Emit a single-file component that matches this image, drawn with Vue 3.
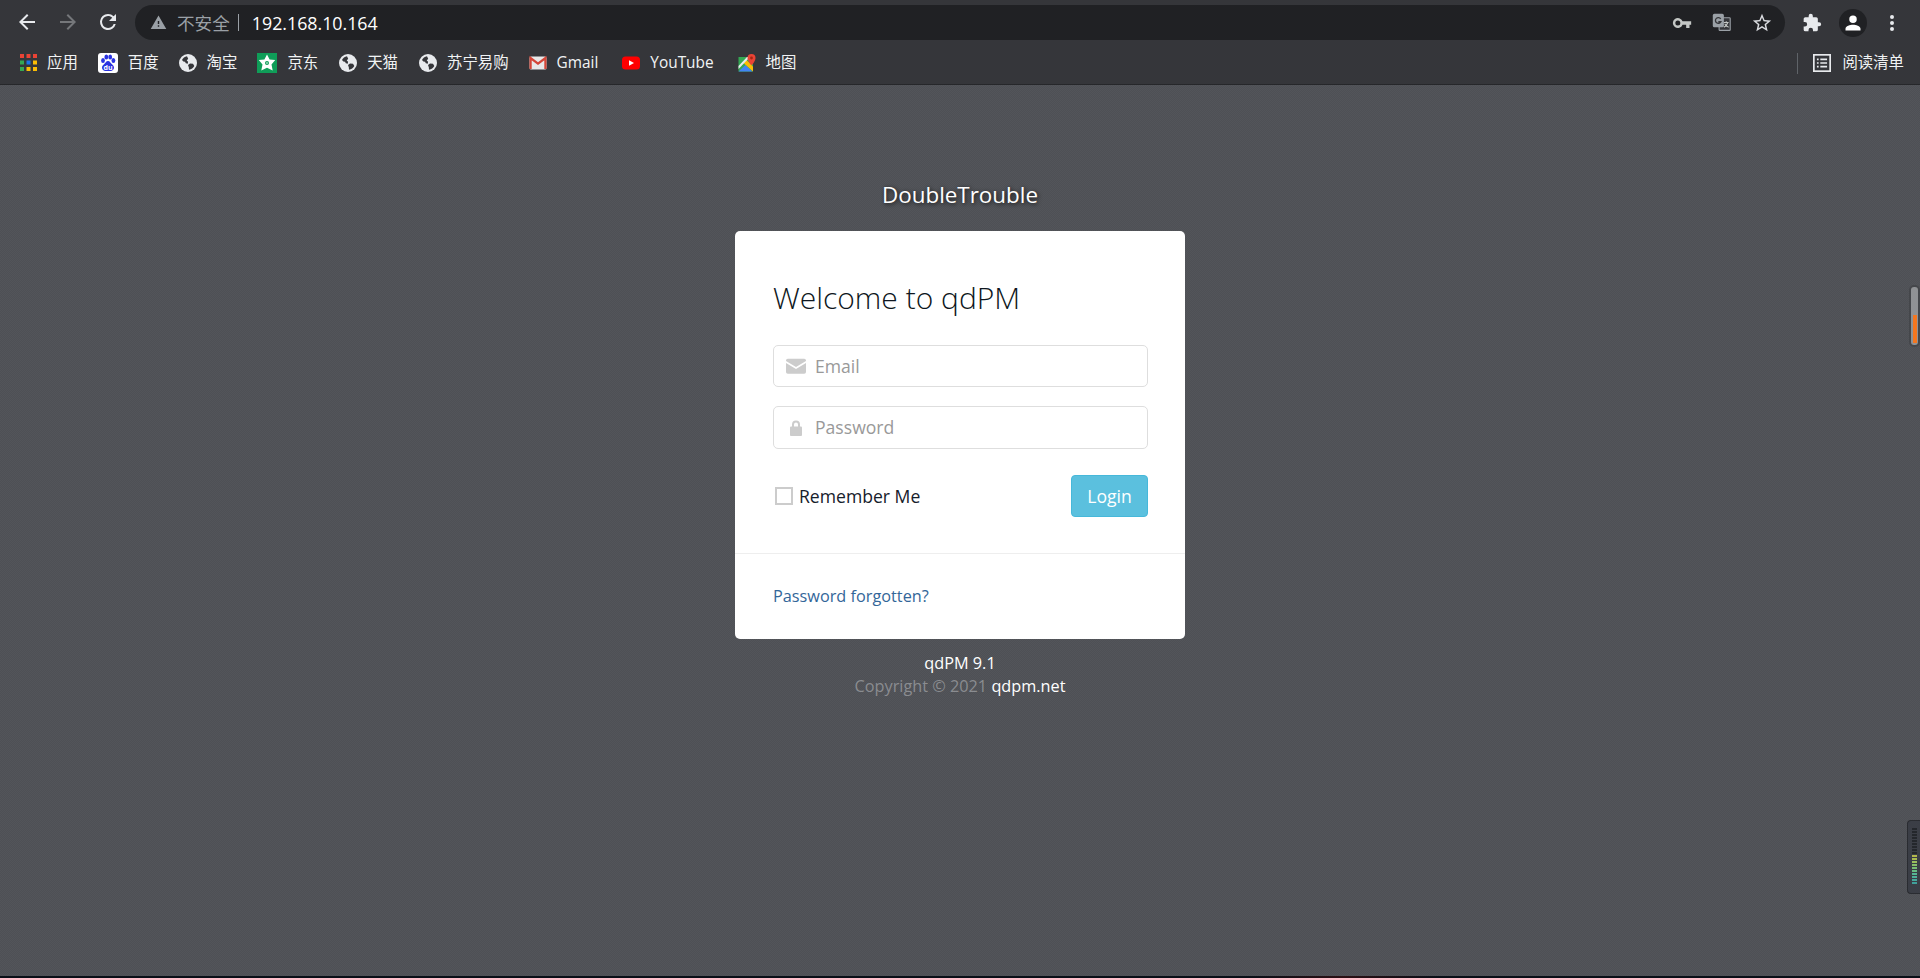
<template>
  <div class="page">
    <header class="toolbar">
      <div class="nav">
        <svg class="nav-icon" viewBox="0 0 24 24"><path fill="#e8eaed" d="M20 11H7.83l5.59-5.59L12 4l-8 8 8 8 1.41-1.41L7.83 13H20z" /></svg>
        <svg class="nav-icon" viewBox="0 0 24 24"><path fill="#75777a" d="M12 4l-1.41 1.41L16.17 11H4v2h12.17l-5.58 5.59L12 20l8-8z" /></svg>
        <svg class="nav-icon" viewBox="0 0 24 24"><path fill="#e8eaed" d="M17.65 6.35A7.96 7.96 0 0 0 12 4a8 8 0 1 0 7.73 10h-2.08A6 6 0 1 1 12 6c1.66 0 3.14.69 4.22 1.78L13 11h7V4z" /></svg>
      </div>
      <div class="omnibox">
        <svg class="warn" viewBox="0 0 24 24"><path fill="#9aa0a6" d="M1 21h22L12 2 1 21zm12-3h-2v-2h2v2zm0-4h-2v-4h2v4z" /></svg>
        <span class="insecure">不安全</span>
        <span class="omni-sep"></span>
        <span class="url">192.168.10.164</span>
        <div class="omni-actions">
          <svg class="omni-key" viewBox="0 0 24 24"><path fill="#c4c7c5" d="M12.65 10A6 6 0 1 0 12.65 14H17v4h4v-4h2v-4zM7 15a3 3 0 1 1 0-6 3 3 0 0 1 0 6z" /></svg>
          <svg class="omni-icon" viewBox="0 0 24 24">
            <rect x="9" y="6" width="14" height="16" rx="1" fill="#35363a" stroke="#9aa0a6" stroke-width="1.4" />
            <rect x="1" y="1" width="14" height="17" rx="2" fill="#9aa0a6" />
            <path fill="none" stroke="#35363a" stroke-width="1.7" d="M11 7.5A3.600 3.600 0 1 0 11.200 11H8" />
            <path fill="none" stroke="#c4c7c5" stroke-width="1.3" d="M15 12h6M18 10.500v1.500M20 12c-1 3-3 5-5 6M16 13.500c1 2 3 3.500 5 4.500" />
          </svg>
          <svg class="omni-star" viewBox="0 0 24 24"><path fill="#dadce0" d="M22 9.240l-7.190-.620L12 2 9.190 8.630 2 9.240l5.460 4.730L5.820 21 12 17.270 18.180 21l-1.630-7.030L22 9.240zM12 15.400l-3.760 2.270 1-4.280-3.320-2.880 4.380-.380L12 6.100l1.710 4.040 4.380.380-3.320 2.880 1 4.280L12 15.400z" /></svg>
        </div>
      </div>
      <div class="tool-actions">
        <svg class="tool-icon" viewBox="0 0 24 24"><path fill="#e8eaed" d="M20.500 11H19V7a2 2 0 0 0-2-2h-4V3.500a2.500 2.500 0 0 0-5 0V5H4a2 2 0 0 0-2 2v3.800h1.500a2.700 2.700 0 0 1 0 5.400H2V20a2 2 0 0 0 2 2h3.800v-1.500a2.700 2.700 0 0 1 5.400 0V22H17a2 2 0 0 0 2-2v-4h1.500a2.500 2.500 0 0 0 0-5z" /></svg>
        <div class="avatar">
          <svg viewBox="0 0 24 24"><path fill="#fff" d="M12 12a4.500 4.500 0 1 0 0-9 4.500 4.500 0 0 0 0 9zm0 2.200c-3.400 0-9 1.700-9 4.600V21h18v-2.200c0-2.900-5.600-4.600-9-4.600z" /></svg>
        </div>
        <svg class="tool-icon dots" viewBox="0 0 24 24"><path fill="#e8eaed" d="M12 8a2 2 0 1 0 0-4 2 2 0 0 0 0 4zm0 2a2 2 0 1 0 0 4 2 2 0 0 0 0-4zm0 6a2 2 0 1 0 0 4 2 2 0 0 0 0-4z" /></svg>
      </div>
    </header>

    <nav class="bookmarks">
      <a v-for="b in bookmarks" :key="b.label" class="bookmark" :class="'bm-' + b.icon">
        <svg v-if="b.icon === 'apps'" class="bm-icon" viewBox="0 0 18 18">
          <rect v-for="c in appCells" :key="c.x + '-' + c.y" :x="c.x" :y="c.y" width="4" height="4" :fill="c.fill" />
        </svg>
        <svg v-else-if="b.icon === 'baidu'" class="bm-icon bm-large" viewBox="0 0 20 20">
          <rect width="20" height="20" rx="3" fill="#fff" />
          <ellipse cx="5" cy="7.500" rx="1.900" ry="2.500" fill="#2932e1" />
          <ellipse cx="8.300" cy="4" rx="1.900" ry="2.500" fill="#2932e1" />
          <ellipse cx="12.200" cy="4" rx="1.900" ry="2.500" fill="#2932e1" />
          <ellipse cx="15.400" cy="7.500" rx="1.900" ry="2.500" fill="#2932e1" />
          <path fill="#2932e1" d="M10 8c-2 0-2.500 2-4 3.200-1.600 1.300-2 2.400-2 3.600 0 2 1.700 3.200 3.500 3.200h5c1.800 0 3.500-1.200 3.500-3.200 0-1.200-.5-2.300-2-3.600C12.500 10 12 8 10 8z" />
          <text x="10" y="16.800" class="du">du</text>
        </svg>
        <svg v-else-if="b.icon === 'jd'" class="bm-icon bm-large" viewBox="0 0 20 20">
          <rect width="20" height="20" fill="#0f9d58" />
          <path fill="#fff" d="M10 1.500l2.600 5 5.600.6-3.700 4.300 1.200 6-5.700-2.600-5.700 2.600 1.200-6L1.800 7.100l5.600-.6z" />
          <circle cx="10" cy="10" r="2" fill="#0f9d58" />
          <circle cx="10" cy="10" r=".8" fill="#fff" />
        </svg>
        <svg v-else-if="b.icon === 'gmail'" class="bm-icon" viewBox="0 0 18 18">
          <rect x="0.500" y="2.500" width="17" height="13" rx="1.500" fill="#e8e8e8" />
          <path fill="none" stroke="#d44638" stroke-width="2.200" d="M1.600 15V4l7.400 5.600L16.400 4v11" />
        </svg>
        <svg v-else-if="b.icon === 'youtube'" class="bm-icon" viewBox="0 0 18 18">
          <rect y="2.500" width="18" height="13" rx="3.500" fill="#f00" />
          <path fill="#fff" d="M7 6.300L12 9l-5 2.700z" />
        </svg>
        <svg v-else-if="b.icon === 'maps'" class="bm-icon" viewBox="0 0 18 18">
          <rect x="0.500" y="3" width="14.500" height="14.500" fill="#34a853" />
          <path fill="#4285f4" d="M0.500 17.500l7-6.500 7 6.500z" />
          <path fill="#fbbc04" d="M5 8.500l10 9v-5L8 5.500z" />
          <path fill="#e8eaed" d="M0.500 12L9 3h3L0.500 15z" />
          <path fill="#ea4335" d="M13.500 0a4 4 0 0 0-4 4c0 3 4 7.500 4 7.500s4-4.500 4-7.500a4 4 0 0 0-4-4z" />
          <circle cx="13.500" cy="4" r="1.400" fill="#a52714" />
        </svg>
        <svg v-else class="bm-icon" viewBox="0 0 18 18">
          <circle cx="9" cy="9" r="9" fill="#e8eaed" />
          <path fill="#35363a" d="M8 2.200C5.800 2.600 3.800 4 3 6l1.400 1.400 1.600.3.800 1.600 2 .4.300-2-1.400-1.200 1.500-1.800zM11 9.500l-2 1.500.8 2.200.2 2.500c2.200-.2 4.500-1.800 5.300-3.700L14 9.800z" />
        </svg>
        <span class="bm-label">{{ b.label }}</span>
      </a>
      <div class="reading">
        <svg class="reading-icon" viewBox="0 0 16 16">
          <rect x="0.750" y="0.750" width="14.500" height="14.500" fill="none" stroke="#e8eaed" stroke-width="1.500" />
          <path fill="#e8eaed" d="M3.500 4h1.500v1.500H3.500zM6.500 4h6v1.500h-6zM3.500 7.250h1.500v1.500H3.500zM6.500 7.250h6v1.500h-6zM3.500 10.500h1.500V12H3.500zM6.500 10.500h6V12h-6z" />
        </svg>
        <span class="bm-label">阅读清单</span>
      </div>
    </nav>

    <main class="content">
      <div class="brand">DoubleTrouble</div>
      <section class="card">
        <form class="card-body" @submit.prevent>
          <h3 class="welcome">Welcome to qdPM</h3>
          <label class="field">
            <svg class="field-icon" viewBox="0 0 20 16">
              <path fill="#ccc" d="M0 2.500A1.800 1.800 0 0 1 1.800.7h16.400A1.800 1.800 0 0 1 20 2.500v.6l-10 6-10-6zM0 5l10 6 10-6v9a1.800 1.800 0 0 1-1.800 1.800H1.800A1.800 1.800 0 0 1 0 14z" />
            </svg>
            <input class="field-input" type="text" placeholder="Email" />
          </label>
          <label class="field field-tall">
            <svg class="field-icon" viewBox="0 0 20 16">
              <path fill="#ccc" d="M6 6.500V4.500a4 4 0 0 1 8 0v2h.8c.6 0 1.200.5 1.200 1.100V15c0 .6-.6 1-1.200 1H5.200c-.6 0-1.200-.4-1.200-1V7.600c0-.6.600-1.100 1.200-1.100zm2-2v2h4v-2a2 2 0 0 0-4 0z" />
            </svg>
            <input class="field-input" type="password" placeholder="Password" />
          </label>
          <div class="actions">
            <label class="remember">
              <span class="check"></span>
              Remember Me
            </label>
            <button class="login" type="submit">Login</button>
          </div>
        </form>
        <div class="card-foot">
          <a class="forgot">Password forgotten?</a>
        </div>
      </section>
      <div class="version">qdPM 9.1</div>
      <div class="copyright">Copyright © 2021 <a class="copy-link">qdpm.net</a></div>
    </main>

    <div class="bottom-strip"></div>

    <!-- Desktop widgets that float over the right edge of the window -->
    <div class="pill"><div class="pill-fill"></div></div>
    <div class="meter">
      <i v-for="(c, i) in meterBars" :key="i" :style="{ background: c }"></i>
    </div>
  </div>
</template>

<script setup>
const bookmarks = [
  { label: "应用", icon: "apps" },
  { label: "百度", icon: "baidu" },
  { label: "淘宝", icon: "globe" },
  { label: "京东", icon: "jd" },
  { label: "天猫", icon: "globe" },
  { label: "苏宁易购", icon: "globe" },
  { label: "Gmail", icon: "gmail" },
  { label: "YouTube", icon: "youtube" },
  { label: "地图", icon: "maps" },
];

const appColors = ["#ea4335", "#ea4335", "#ea4335", "#34a853", "#1a73e8", "#fbbc04", "#34a853", "#fbbc04", "#fbbc04"];
const appCells = appColors.map((fill, i) => ({
  x: (i % 3) * 6.5,
  y: Math.floor(i / 3) * 6.5,
  fill,
}));

const meterBars = [
  "#24272c", "#24272c", "#24272c", "#24272c", "#24272c", "#24272c", "#24272c",
  "#24272c", "#24272c", "#b4b84c", "#a9bb50", "#9bc05c", "#88c068", "#78bf74",
  "#66bc84", "#55b794", "#4eb09a", "#46a89c", "#3fa09a",
];
</script>

<style>
html,
body {
  margin: 0;
  background: #505257;
}
</style>

<style scoped>
.page {
  height: 978px;
  display: flex;
  flex-direction: column;
  overflow: hidden;
  position: relative;
  font-family: "Open Sans", "Noto Sans CJK SC", sans-serif;
  /* fine dither the dimmed page shows in the screenshot */
  background: repeating-conic-gradient(#4e5055 0 25%, #53555a 0 50%) 0 0 / 2px 2px;
}

/* browser chrome */
.toolbar {
  height: 42px;
  flex: none;
  display: flex;
  align-items: flex-start;
  padding-top: 5px;
  box-sizing: border-box;
  background: #35363a;
}
.nav {
  width: 135px;
  flex: none;
  display: flex;
  gap: 16.5px;
  padding: 5px 0 0 15px;
  box-sizing: border-box;
}
.nav-icon {
  width: 24px;
  height: 24px;
}
.omnibox {
  width: 1650px;
  height: 35px;
  flex: none;
  display: flex;
  align-items: center;
  padding: 0 12px 0 15px;
  box-sizing: border-box;
  background: #202124;
  border-radius: 18px;
}
.warn {
  width: 17px;
  height: 17px;
  margin-right: 10px;
}
.insecure {
  color: #9aa0a6;
  font-size: 17.6px;
  font-family: "Noto Sans CJK SC", sans-serif;
}
.omni-sep {
  width: 1px;
  height: 17px;
  margin: 0 13px 0 8px;
  background: #9aa0a6;
}
.url {
  color: #fff;
  font-size: 17.8px;
}
.omni-actions {
  margin-left: auto;
  display: flex;
  gap: 20px;
  align-items: center;
}
.omni-key {
  width: 20px;
  height: 20px;
}
.omni-icon {
  width: 19px;
  height: 19px;
}
.omni-star {
  width: 22px;
  height: 22px;
}
.tool-actions {
  flex: 1;
  display: flex;
  align-items: center;
  height: 35px;
  padding-left: 17px;
  gap: 14px;
}
.tool-icon {
  width: 20px;
  height: 20px;
}
.dots {
  margin-left: -1px;
  width: 24px;
  height: 24px;
}
.avatar {
  width: 28px;
  height: 28px;
  margin-left: 3px;
  border-radius: 50%;
  background: #202124;
  display: flex;
  align-items: center;
  justify-content: center;
}
.avatar svg {
  width: 20px;
  height: 20px;
}
.bookmarks {
  height: 43px;
  flex: none;
  display: flex;
  align-items: center;
  gap: 20px;
  padding: 0 16px 0 20px;
  box-sizing: border-box;
  background: #35363a;
  border-bottom: 1px solid #26272a;
}
.bookmark {
  display: flex;
  align-items: center;
  gap: 10px;
}
.bm-apps {
  gap: 9px;
}
.bm-jd,
.bookmark:nth-child(5) {
  margin-right: 1px;
}
.bm-gmail,
.bm-youtube {
  margin-right: 4px;
}
.bm-icon {
  width: 18px;
  height: 18px;
  flex: none;
}
.bm-large {
  width: 20px;
  height: 20px;
}
.du {
  fill: #fff;
  font-size: 7px;
  font-weight: 700;
  text-anchor: middle;
  font-family: "Open Sans", sans-serif;
}
.bm-label {
  color: #f1f3f4;
  font-size: 15.4px;
  line-height: 20px;
  white-space: nowrap;
}
.reading {
  margin-left: auto;
  display: flex;
  align-items: center;
  gap: 11px;
  padding-left: 15px;
  height: 21px;
  border-left: 1px solid #5f6368;
}
.reading-icon {
  width: 18px;
  height: 18px;
}

/* login page */
.content {
  flex: 1;
  display: flex;
  flex-direction: column;
  align-items: center;
  padding-top: 94px;
}
.brand {
  color: #fff;
  font-size: 22.4px;
  line-height: 32px;
  text-shadow: 1px 1px 4px rgba(0, 0, 0, 0.8);
  margin-bottom: 20px;
}
.card {
  width: 450px;
  height: 408px;
  flex: none;
  display: flex;
  flex-direction: column;
  background: #fff;
  border-radius: 5px;
}
.card-body {
  height: 323px;
  flex: none;
  padding: 49px 37px 0 38px;
  box-sizing: border-box;
  border-bottom: 1px solid #eee;
}
.welcome {
  margin: 0 0 29px;
  color: #0d1620;
  font-size: 30px;
  font-weight: 300;
  line-height: 36px;
}
.field {
  display: flex;
  align-items: center;
  height: 42px;
  margin-bottom: 19px;
  padding-left: 12px;
  box-sizing: border-box;
  border: 1px solid #dedede;
  border-radius: 5px;
}
.field-tall {
  height: 43px;
}
.field-tall .field-input {
  margin-bottom: 2px;
}
.field-icon {
  width: 20px;
  height: 16px;
  flex: none;
}
.field-input {
  flex: 1;
  min-width: 0;
  margin-left: 9px;
  padding: 0;
  border: none;
  outline: none;
  background: transparent;
  color: #333;
  font-family: "Open Sans", sans-serif;
  font-size: 17.6px;
}
.field-input::placeholder {
  color: #999;
  opacity: 1;
}
.actions {
  display: flex;
  align-items: center;
  justify-content: space-between;
  margin-top: 26px;
}
.remember {
  display: flex;
  align-items: center;
  gap: 6px;
  padding-left: 2px;
  color: #16202b;
  font-size: 17.6px;
}
.check {
  width: 18px;
  height: 18px;
  box-sizing: border-box;
  border: 2px solid #ccc;
}
.login {
  width: 77px;
  height: 42px;
  padding: 0;
  border: 1px solid #46b8da;
  border-radius: 4px;
  background: #5bc0de;
  color: #fff;
  font-family: "Open Sans", sans-serif;
  font-size: 17.6px;
}
.card-foot {
  flex: 1;
  display: flex;
  align-items: center;
  padding: 0 38px 2px;
}
.forgot {
  color: #336699;
  font-size: 16.28px;
}
.version {
  margin-top: 13px;
  color: #fff;
  font-size: 16.28px;
  line-height: 23px;
}
.copyright {
  color: #8a8c90;
  font-size: 16.28px;
  line-height: 23px;
}
.copy-link {
  color: #fff;
}
.bottom-strip {
  height: 2px;
  flex: none;
  background: linear-gradient(90deg, #0a1018, #0a1018 65%, #2a1014 70%, #0a1018 75%);
}

/* floating widgets */
.pill {
  position: absolute;
  top: 285px;
  left: 1909px;
  width: 7px;
  height: 58px;
  border: 2px solid #45474b;
  border-radius: 5px;
  background: #909295;
  overflow: hidden;
}
.pill-fill {
  width: 4px;
  height: 28px;
  margin: 28px auto 0;
  background: #f4761f;
}
.meter {
  position: absolute;
  top: 820px;
  left: 1907px;
  width: 13px;
  height: 74px;
  padding: 7px 3px 0 4px;
  box-sizing: border-box;
  display: flex;
  flex-direction: column;
  gap: 1px;
  background: #3b3e46;
  border: 1px solid #2a2c31;
  border-right: none;
  border-radius: 4px 0 0 4px;
}
.meter i {
  display: block;
  height: 2px;
  flex: none;
}
</style>
